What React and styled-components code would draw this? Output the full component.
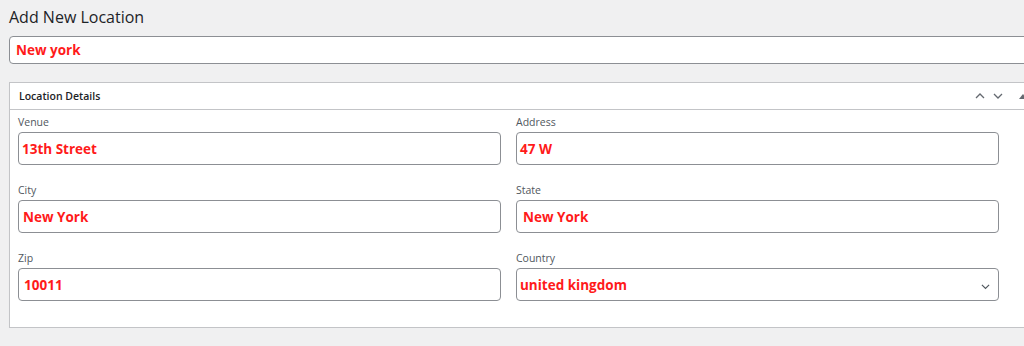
import React from "react";
import styled, { createGlobalStyle } from "styled-components";

const GlobalStyle = createGlobalStyle`
    html, body {
        margin: 0;
        padding: 0;
        background: #f0f0f1;
        overflow: hidden;
    }
    body {
        font-family: "Open Sans", "Noto Sans", sans-serif;
        color: #1d2327;
    }
`;

const Page = styled.div`
    width: 1032px;
    padding: 4px 0 0 9px;
`;

const Title = styled.h1`
    margin: 0;
    font-size: 16px;
    font-weight: 400;
    line-height: 26px;
    color: #1d2327;
`;

const TitleInput = styled.div`
    margin-top: 6px;
    height: 28px;
    box-sizing: border-box;
    display: flex;
    align-items: center;
    padding: 0 6px;
    background: #fff;
    border: 1px solid #8c8f94;
    border-radius: 4px;
    font-size: 13.5px;
    font-weight: 700;
    color: #ff1a1a;
`;

const Panel = styled.section`
    margin-top: 18px;
    background: #fff;
    border: 1px solid #c3c4c7;
    box-shadow: 0 1px 1px rgba(0, 0, 0, 0.04);
`;

const PanelHeader = styled.div`
    height: 26px;
    display: flex;
    align-items: center;
    justify-content: space-between;
    padding: 0 0 0 9px;
    border-bottom: 1px solid #c3c4c7;
`;

const PanelTitle = styled.h2`
    margin: 0;
    font-size: 10.5px;
    font-weight: 600;
    color: #1d2327;
`;

const HeaderTools = styled.div`
    display: flex;
    align-items: center;
    gap: 8px;
    padding-right: 12px;
    color: #646970;
    svg {
        display: block;
    }
`;

const ToggleArrow = styled.svg`
    margin-left: 7px;
`;

const Fields = styled.div`
    display: grid;
    grid-template-columns: 483px 483px;
    column-gap: 15px;
    row-gap: 18px;
    padding: 5px 0 26px 8px;
`;

const Field = styled.label`
    display: flex;
    flex-direction: column;
`;

const Label = styled.span`
    font-size: 10.5px;
    line-height: 14px;
    color: #50575e;
    margin-bottom: 3px;
`;

const Input = styled.div`
    height: 33px;
    box-sizing: border-box;
    display: flex;
    align-items: center;
    justify-content: space-between;
    padding: 0 ${p => (p.$select ? "8px" : "10px")} 0 ${p => (p.$pad || 3)}px;
    background: #fff;
    border: 1px solid #8c8f94;
    border-radius: 4px;
    font-size: 13.5px;
    font-weight: 700;
    color: #ff1a1a;
`;

const SelectArrow = styled.span`
    color: #50575e;
`;

const Chevron = ({ dir = "down", size = 10 }) => (
    <svg width={size} height={size * 0.6} viewBox="0 0 10 6" fill="none">
        <path
            d={dir === "down" ? "M1 1 L5 5 L9 1" : "M1 5 L5 1 L9 5"}
            stroke="currentColor"
            strokeWidth="1.3"
        />
    </svg>
);

const fields = [
    { label: "Venue", value: "13th Street", pad: 3 },
    { label: "Address", value: "47 W", pad: 3 },
    { label: "City", value: "New York", pad: 4 },
    { label: "State", value: "New York", pad: 6 },
    { label: "Zip", value: "10011", pad: 5 },
    { label: "Country", value: "united kingdom", pad: 3, select: true },
];

const App = () => (
    <>
        <GlobalStyle />
        <Page>
            <Title>Add New Location</Title>
            <TitleInput>New york</TitleInput>
            <Panel>
                <PanelHeader>
                    <PanelTitle>Location Details</PanelTitle>
                    <HeaderTools>
                        <Chevron dir="up" />
                        <Chevron dir="down" />
                        <ToggleArrow width="10" height="6" viewBox="0 0 10 6">
                            <path d="M1 6 L5 1 L9 6 Z" fill="currentColor" />
                        </ToggleArrow>
                    </HeaderTools>
                </PanelHeader>
                <Fields>
                    {fields.map(f => (
                        <Field key={f.label}>
                            <Label>{f.label}</Label>
                            <Input $pad={f.pad} $select={f.select}>
                                {f.value}
                                {f.select && (
                                    <SelectArrow>
                                        <Chevron size={9} />
                                    </SelectArrow>
                                )}
                            </Input>
                        </Field>
                    ))}
                </Fields>
            </Panel>
        </Page>
    </>
);

export default App;
